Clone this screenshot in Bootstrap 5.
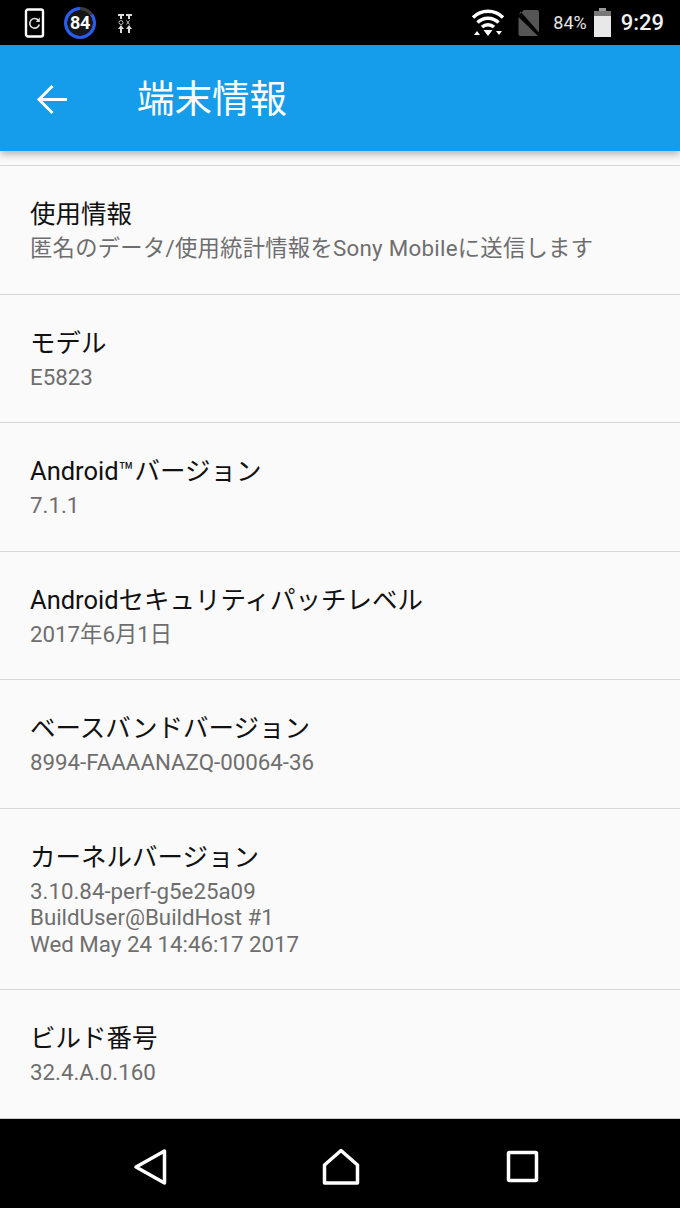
<!DOCTYPE html>
<html lang="ja"><head><meta charset="utf-8">
<link href="https://cdn.jsdelivr.net/npm/bootstrap@5.3.0/dist/css/bootstrap.min.css" rel="stylesheet">
<style>
html,body{height:1208px;overflow:hidden;background:#fafafa;font-family:Roboto,"Noto Sans CJK JP",sans-serif}
.phone{width:680px;height:1208px}
.statusbar{height:45px;background:#000;color:#fff}
.status-pct{font-size:18px;color:#e4e4e4;margin-left:11px}
.status-time{font-size:22px;font-weight:500;color:#f2f2f2;margin-left:9px;margin-right:16px}
.icon-device{margin-left:24px}
.icon-tuner{margin-left:19px}
.icon-sim{margin-left:11px}
.icon-battery{margin-left:6px}
.appbar{height:106px;background:#159ceb;color:#fff;box-shadow:0 3px 8px rgba(0,0,0,.3);position:relative;z-index:1}
.appbar-title{font-size:37.5px;line-height:1;margin-left:58px;padding-top:3px}
.back-slot{margin-left:36px;width:43px;padding-top:2px}
.gauge{width:32px;height:32px;border-radius:50%;background:radial-gradient(circle closest-side,#161616 78%,transparent 81%),conic-gradient(#3a3a3a 0 15%,#2a5cf0 15%);font-size:18px;font-weight:700;color:#fff;margin-left:18px;letter-spacing:-.3px}
.info-list{padding-top:14px;background:#fafafa;height:967px}
.info-row{border-top:1px solid #d6d6d6;height:128.5px;padding:33px 30px 0}
.info-row.tall{height:181.3px}
.row-title{font-size:25.5px;line-height:30px;color:#111}
.row-sub{font-size:22.3px;line-height:26.6px;color:#6e6e6e;margin-top:6px}
.row-sub-wide{letter-spacing:.28px}
.navbar-bottom{height:90px;background:#000;border-top:1px solid #ccc}
.nav-icon{margin-top:7px}
.nav-back{margin-left:133px}
.nav-home{margin-left:152px}
.nav-recent{margin-left:145px}
</style></head><body>
<div class="phone d-flex flex-column">
  <div class="statusbar d-flex align-items-center">
    <svg class="icon-device" width="22" height="30" viewBox="0 0 22 30" fill="none"><rect x="2" y="1.500" width="17" height="27" rx="2" stroke="#fff" stroke-width="2.400"/><path d="M14.500 12.500a4.800 4.800 0 1 0 .8 4" stroke="#ddd" stroke-width="1.600"/><path d="M15.800 9.500v4.500h-4.200z" fill="#ddd"/></svg>
    <div class="gauge d-flex align-items-center justify-content-center">84</div>
    <svg class="icon-tuner" width="20" height="22" viewBox="0 0 20 22" fill="#ddd"><path d="M3 2h6v2H7v3H5V4H3zM11 2h6v2h-2v3h-2V4h-2z"/><circle cx="6" cy="10.500" r="2" fill="none" stroke="#bbb"/><path d="M11.500 8.500l3 4m0-4l-3 4" stroke="#bbb"/><path d="M6 13l3 4H7v4H5v-4H3zM14 13l3 4h-2v4h-2v-4h-2z"/></svg>
    <div class="ms-auto d-flex align-items-center">
      <svg width="34" height="28" viewBox="0 0 34 28" fill="none" stroke="#fff"><path d="M2 8.500a21 21 0 0 1 30 0" stroke-width="3.400"/><path d="M6.500 13.500a15 15 0 0 1 21 0" stroke-width="3.400"/><path d="M11 18a9 9 0 0 1 12 0" stroke-width="3.400"/><path d="M12.500 21h9L17 27z" fill="#fff" stroke="none"/><path d="M3 26l3-4 3 4zM25 22h6l-3 4z" fill="#fff" stroke="none"/></svg>
      <svg class="icon-sim" width="26" height="28" viewBox="0 0 26 28"><path d="M3 6l5-5h13a2 2 0 0 1 2 2v20.500L4.500 2.500zM2.500 8L22 27H4.500a2 2 0 0 1-2-2z" fill="#555"/></svg>
      <span class="status-pct">84%</span>
      <svg class="icon-battery" width="19" height="29" viewBox="0 0 19 29" fill="#e8e8e8"><path d="M6 0h7v3H6z" fill="#999"/><path d="M1 3h17v5H1z" fill="#777"/><path d="M1 8h17v21H1z"/></svg>
      <span class="status-time">9:29</span>
    </div>
  </div>
  <div class="appbar d-flex align-items-center">
    <div class="back-slot d-flex">
      <svg width="33" height="33" viewBox="0 0 33 33" fill="none" stroke="#fff" stroke-width="3"><path d="M31 16.500H4"/><path d="M16.500 3L3 16.500 16.500 30"/></svg>
    </div>
    <div class="appbar-title">端末情報</div>
  </div>
  <div class="info-list">
    <div class="info-row"><div class="row-title">使用情報</div><div class="row-sub row-sub-wide">匿名のデータ/使用統計情報をSony Mobileに送信します</div></div>
    <div class="info-row"><div class="row-title">モデル</div><div class="row-sub">E5823</div></div>
    <div class="info-row"><div class="row-title">Android™バージョン</div><div class="row-sub">7.1.1</div></div>
    <div class="info-row"><div class="row-title">Androidセキュリティパッチレベル</div><div class="row-sub">2017年6月1日</div></div>
    <div class="info-row"><div class="row-title">ベースバンドバージョン</div><div class="row-sub">8994-FAAAANAZQ-00064-36</div></div>
    <div class="info-row tall"><div class="row-title">カーネルバージョン</div><div class="row-sub">3.10.84-perf-g5e25a09<br>BuildUser@BuildHost #1<br>Wed May 24 14:46:17 2017</div></div>
    <div class="info-row"><div class="row-title">ビルド番号</div><div class="row-sub">32.4.A.0.160</div></div>
  </div>
  <div class="navbar-bottom d-flex align-items-center">
    <svg class="nav-icon nav-back" width="36" height="38" viewBox="0 0 36 38" fill="none" stroke="#fff" stroke-width="3.500" stroke-linejoin="round"><path d="M31.500 3v32L3 19z"/></svg>
    <svg class="nav-icon nav-home" width="40" height="38" viewBox="0 0 40 38" fill="none" stroke="#fff" stroke-width="3.500" stroke-linejoin="round"><path d="M20 2.500L36.500 17v18H3.500V17z"/></svg>
    <svg class="nav-icon nav-recent" width="34" height="34" viewBox="0 0 34 34" fill="none" stroke="#fff" stroke-width="3.500" stroke-linejoin="round"><rect x="2.500" y="2.500" width="28" height="28" rx="1"/></svg>
  </div>
</div>
<script src="https://cdn.jsdelivr.net/npm/bootstrap@5.3.0/dist/js/bootstrap.bundle.min.js"></script>
</body></html>
